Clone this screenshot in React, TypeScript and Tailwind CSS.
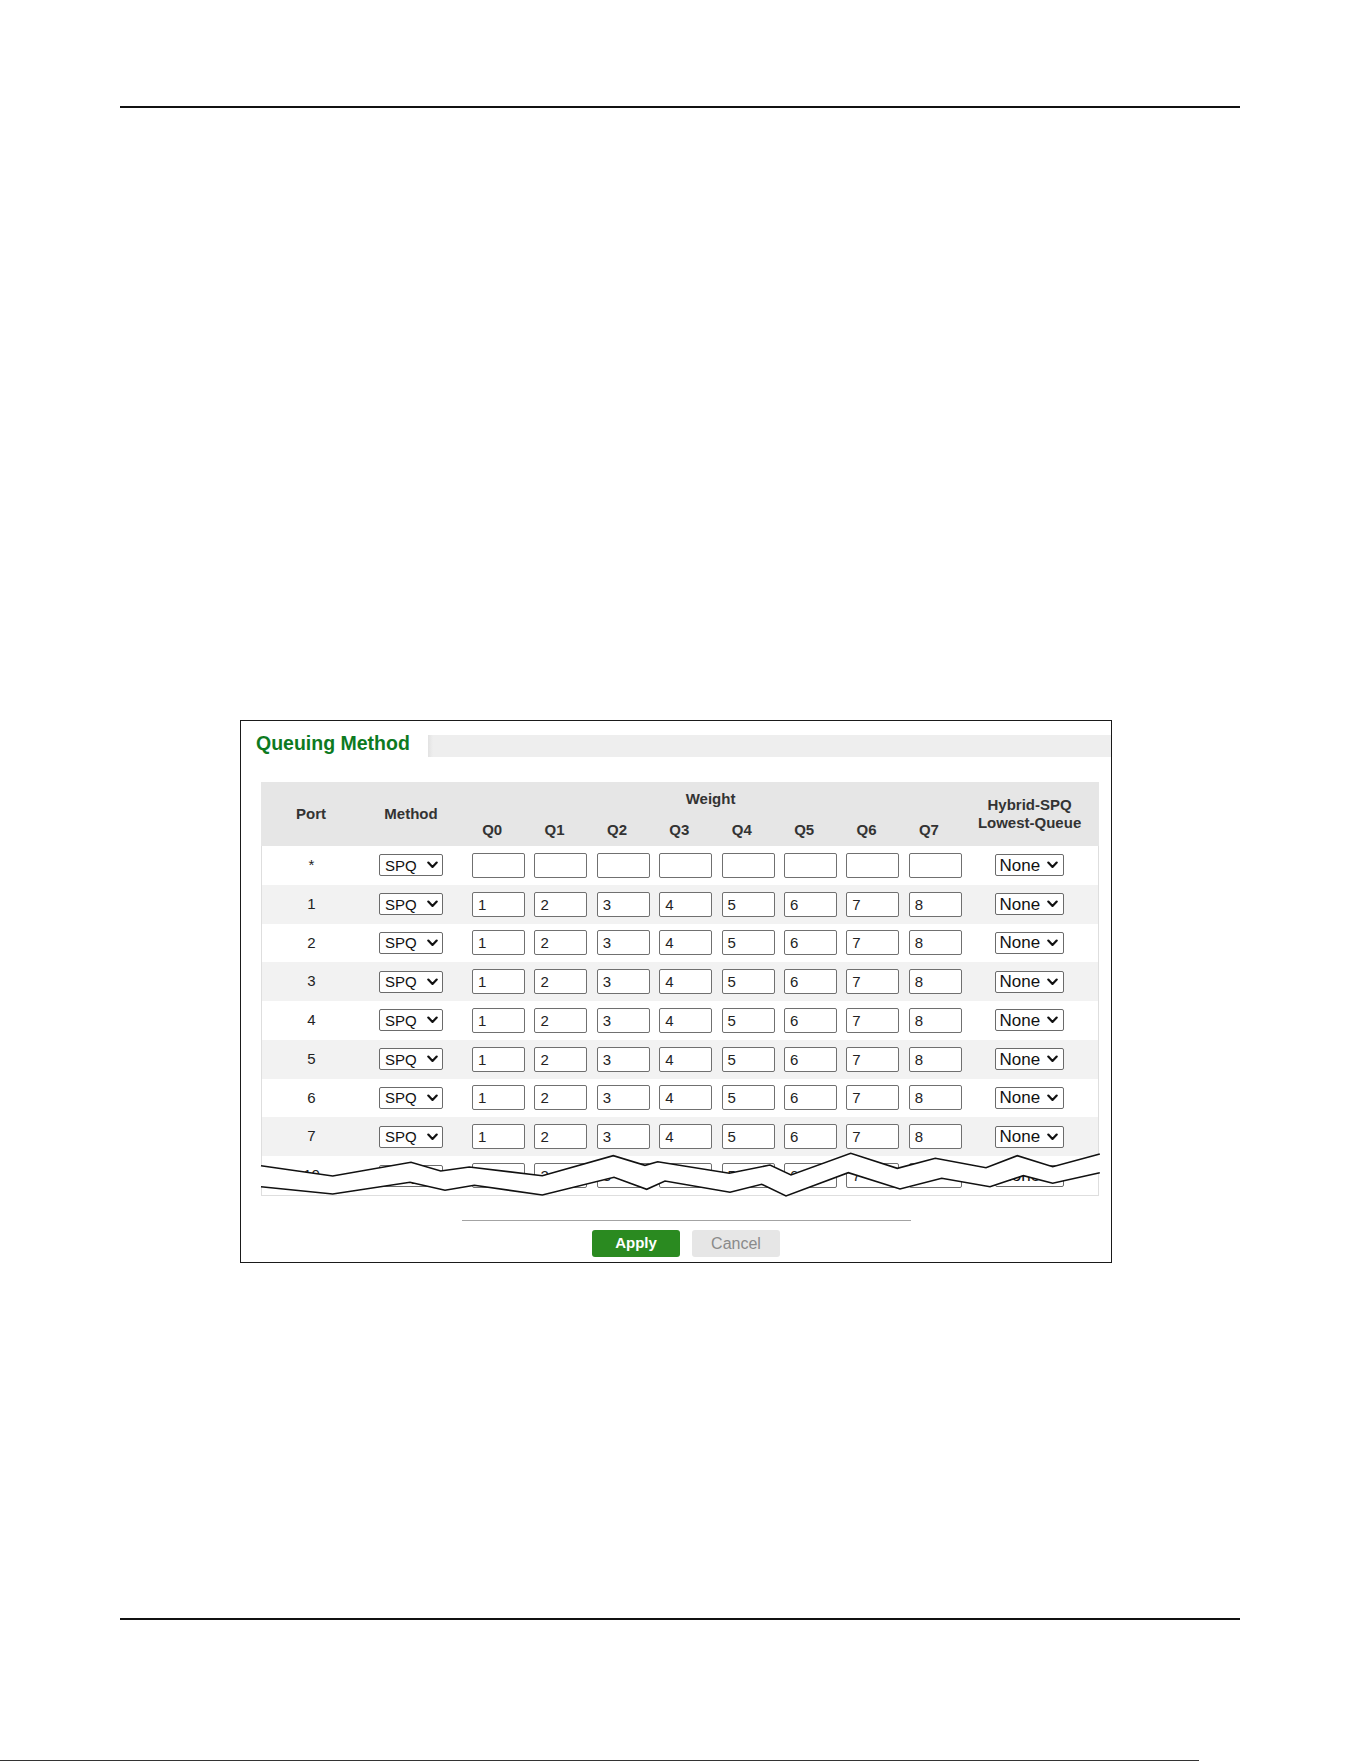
import React from 'react'

const ports = ['*', '1', '2', '3', '4', '5', '6', '7', '10']
const queues = ['Q0', 'Q1', 'Q2', 'Q3', 'Q4', 'Q5', 'Q6', 'Q7']
const qCols = [
  'col-start-3',
  'col-start-4',
  'col-start-5',
  'col-start-6',
  'col-start-7',
  'col-start-8',
  'col-start-9',
  'col-start-10',
]

const upper =
  '0,383.7 71.7,394 150,380.3 179.7,389 208.3,385 281.3,393.7 352.3,373.7 384,383.3 396.7,379.7 468.3,391.3 509,383 530,393 589.7,371.3 636.3,386.3 674.3,376.3 725,385.7 756.3,373.7 791.7,384.7 838.8,372'
const lower =
  '0,404.7 71.7,412 149,400.3 184,408.3 213.3,403.3 281.3,413 353,395.3 385.7,407.3 404,399 469,410.3 500.7,402.3 525,414 587.3,390.7 639,407 680.7,396.3 729,404.7 762.3,393.7 791.7,401.3 838.8,390.7'
const band = upper + ' ' + lower.split(' ').reverse().join(' ')

const Chevron = () => (
  <svg width="11" height="8" viewBox="0 0 11 8" className="shrink-0">
    <polyline
      points="1.3,1.6 5.5,5.9 9.7,1.6"
      fill="none"
      stroke="#111"
      strokeWidth="2.2"
      strokeLinecap="round"
      strokeLinejoin="round"
    />
  </svg>
)

const Row: React.FC<{ port: string; idx: number; last: boolean }> = ({ port, idx, last }) => {
  const empty = port === '*'
  return (
    <div
      className={`grid grid-cols-[99px_100px_repeat(8,62.4px)_1fr] items-center ${
        last ? 'h-[39px]' : 'h-[38.75px]'
      } ${idx % 2 === 1 ? 'bg-[#f2f2f2]' : 'bg-white'}`}
    >
      <div className="text-center text-[15px] text-[#222]">{port}</div>
      <div className="flex justify-center">
        <div className="flex h-[22px] w-[64px] items-center justify-between rounded-[2px] border border-[#6b6b6b] bg-white pl-[5px] pr-[4px] text-[15px] leading-none text-[#111]">
          <span>SPQ</span>
          <Chevron />
        </div>
      </div>
      {queues.map((q, i) => (
        <div key={q}>
          <div className="ml-[11px] flex h-[25px] w-[53px] items-center rounded-[2px] border border-[#707070] bg-white pl-[5px] text-[15px] leading-none text-[#222]">
            {empty ? '' : i + 1}
          </div>
        </div>
      ))}
      <div className="flex justify-center">
        <div className="flex h-[22px] w-[69px] items-center justify-between rounded-[2px] border border-[#6b6b6b] bg-white pl-[4px] pr-[5px] text-[17px] leading-none text-[#111]">
          <span>None</span>
          <Chevron />
        </div>
      </div>
    </div>
  )
}

export default function App() {
  return (
    <div className="relative h-[1761px] w-[1361px] overflow-hidden bg-white font-['Liberation_Sans',Arial,sans-serif]">
      <div className="ml-[120px] mt-[106px] h-[2px] w-[1120px] bg-[#111]" />

      {/* panel */}
      <div className="ml-[240px] mt-[612px] w-[872px] border border-[#1a1a1a] pb-[5px] pt-[14px]">
        <div className="flex h-[22px]">
          <div className="flex w-[187px] bg-white">
            <span className="h-full pl-[15px] text-[19.5px] font-bold leading-[16px] text-[#0d7a1f]">
              Queuing Method
            </span>
          </div>
          <div className="w-[5px] bg-gradient-to-r from-[#e2e2e2] to-[#eeeeee]" />
          <div className="flex-1 bg-[#eeeeee]" />
        </div>

        {/* table */}
        <div className="relative ml-[20px] mt-[25px] w-[838px]">
          <div className="grid h-[64px] grid-cols-[100px_100px_repeat(8,62.4px)_1fr] grid-rows-[39px_25px] bg-[#e6e6e6] text-[15px] font-bold text-[#333]">
            <div className="col-start-1 row-span-2 row-start-1 flex items-center justify-center">
              Port
            </div>
            <div className="col-start-2 row-span-2 row-start-1 flex items-center justify-center">
              Method
            </div>
            <div className="col-span-8 col-start-3 row-start-1 pt-[8px] text-center leading-[17px]">
              Weight
            </div>
            <div className="col-start-11 row-span-2 row-start-1 flex flex-col items-center justify-center leading-[18px]">
              <span>Hybrid-SPQ</span>
              <span>Lowest-Queue</span>
            </div>
            {queues.map((q, i) => (
              <div key={q} className={`row-start-2 text-center leading-[17px] ${qCols[i]}`}>
                {q}
              </div>
            ))}
          </div>

          <div className="border-x border-b border-[#dedede]">
            {ports.map((p, i) => (
              <Row key={p} port={p} idx={i} last={i === ports.length - 1} />
            ))}
          </div>

          <svg
            width="840"
            height="420"
            viewBox="0 0 840 420"
            className="pointer-events-none absolute left-0 top-0 overflow-visible"
          >
            <polygon points={band} fill="#ffffff" />
            <polyline points={upper} fill="none" stroke="#111" strokeWidth="1.6" />
            <polyline points={lower} fill="none" stroke="#111" strokeWidth="1.6" />
          </svg>
        </div>

        <div className="ml-[221px] mt-[24px] h-px w-[449px] bg-[#a3a3a3]" />

        <div className="ml-[351px] mt-[9px] flex gap-[12px]">
          <button className="h-[27px] w-[88px] rounded-[3px] bg-[#2a8a20] text-[15px] font-bold text-white">
            Apply
          </button>
          <button className="h-[27px] w-[88px] rounded-[3px] bg-[#e6e6e6] text-[16px] text-[#8a8a8a]">
            Cancel
          </button>
        </div>
      </div>

      <div className="ml-[120px] mt-[355px] h-[2px] w-[1120px] bg-[#111]" />

      <div className="absolute bottom-0 left-0 h-px w-[1199px] bg-[#333]" />
    </div>
  )
}
